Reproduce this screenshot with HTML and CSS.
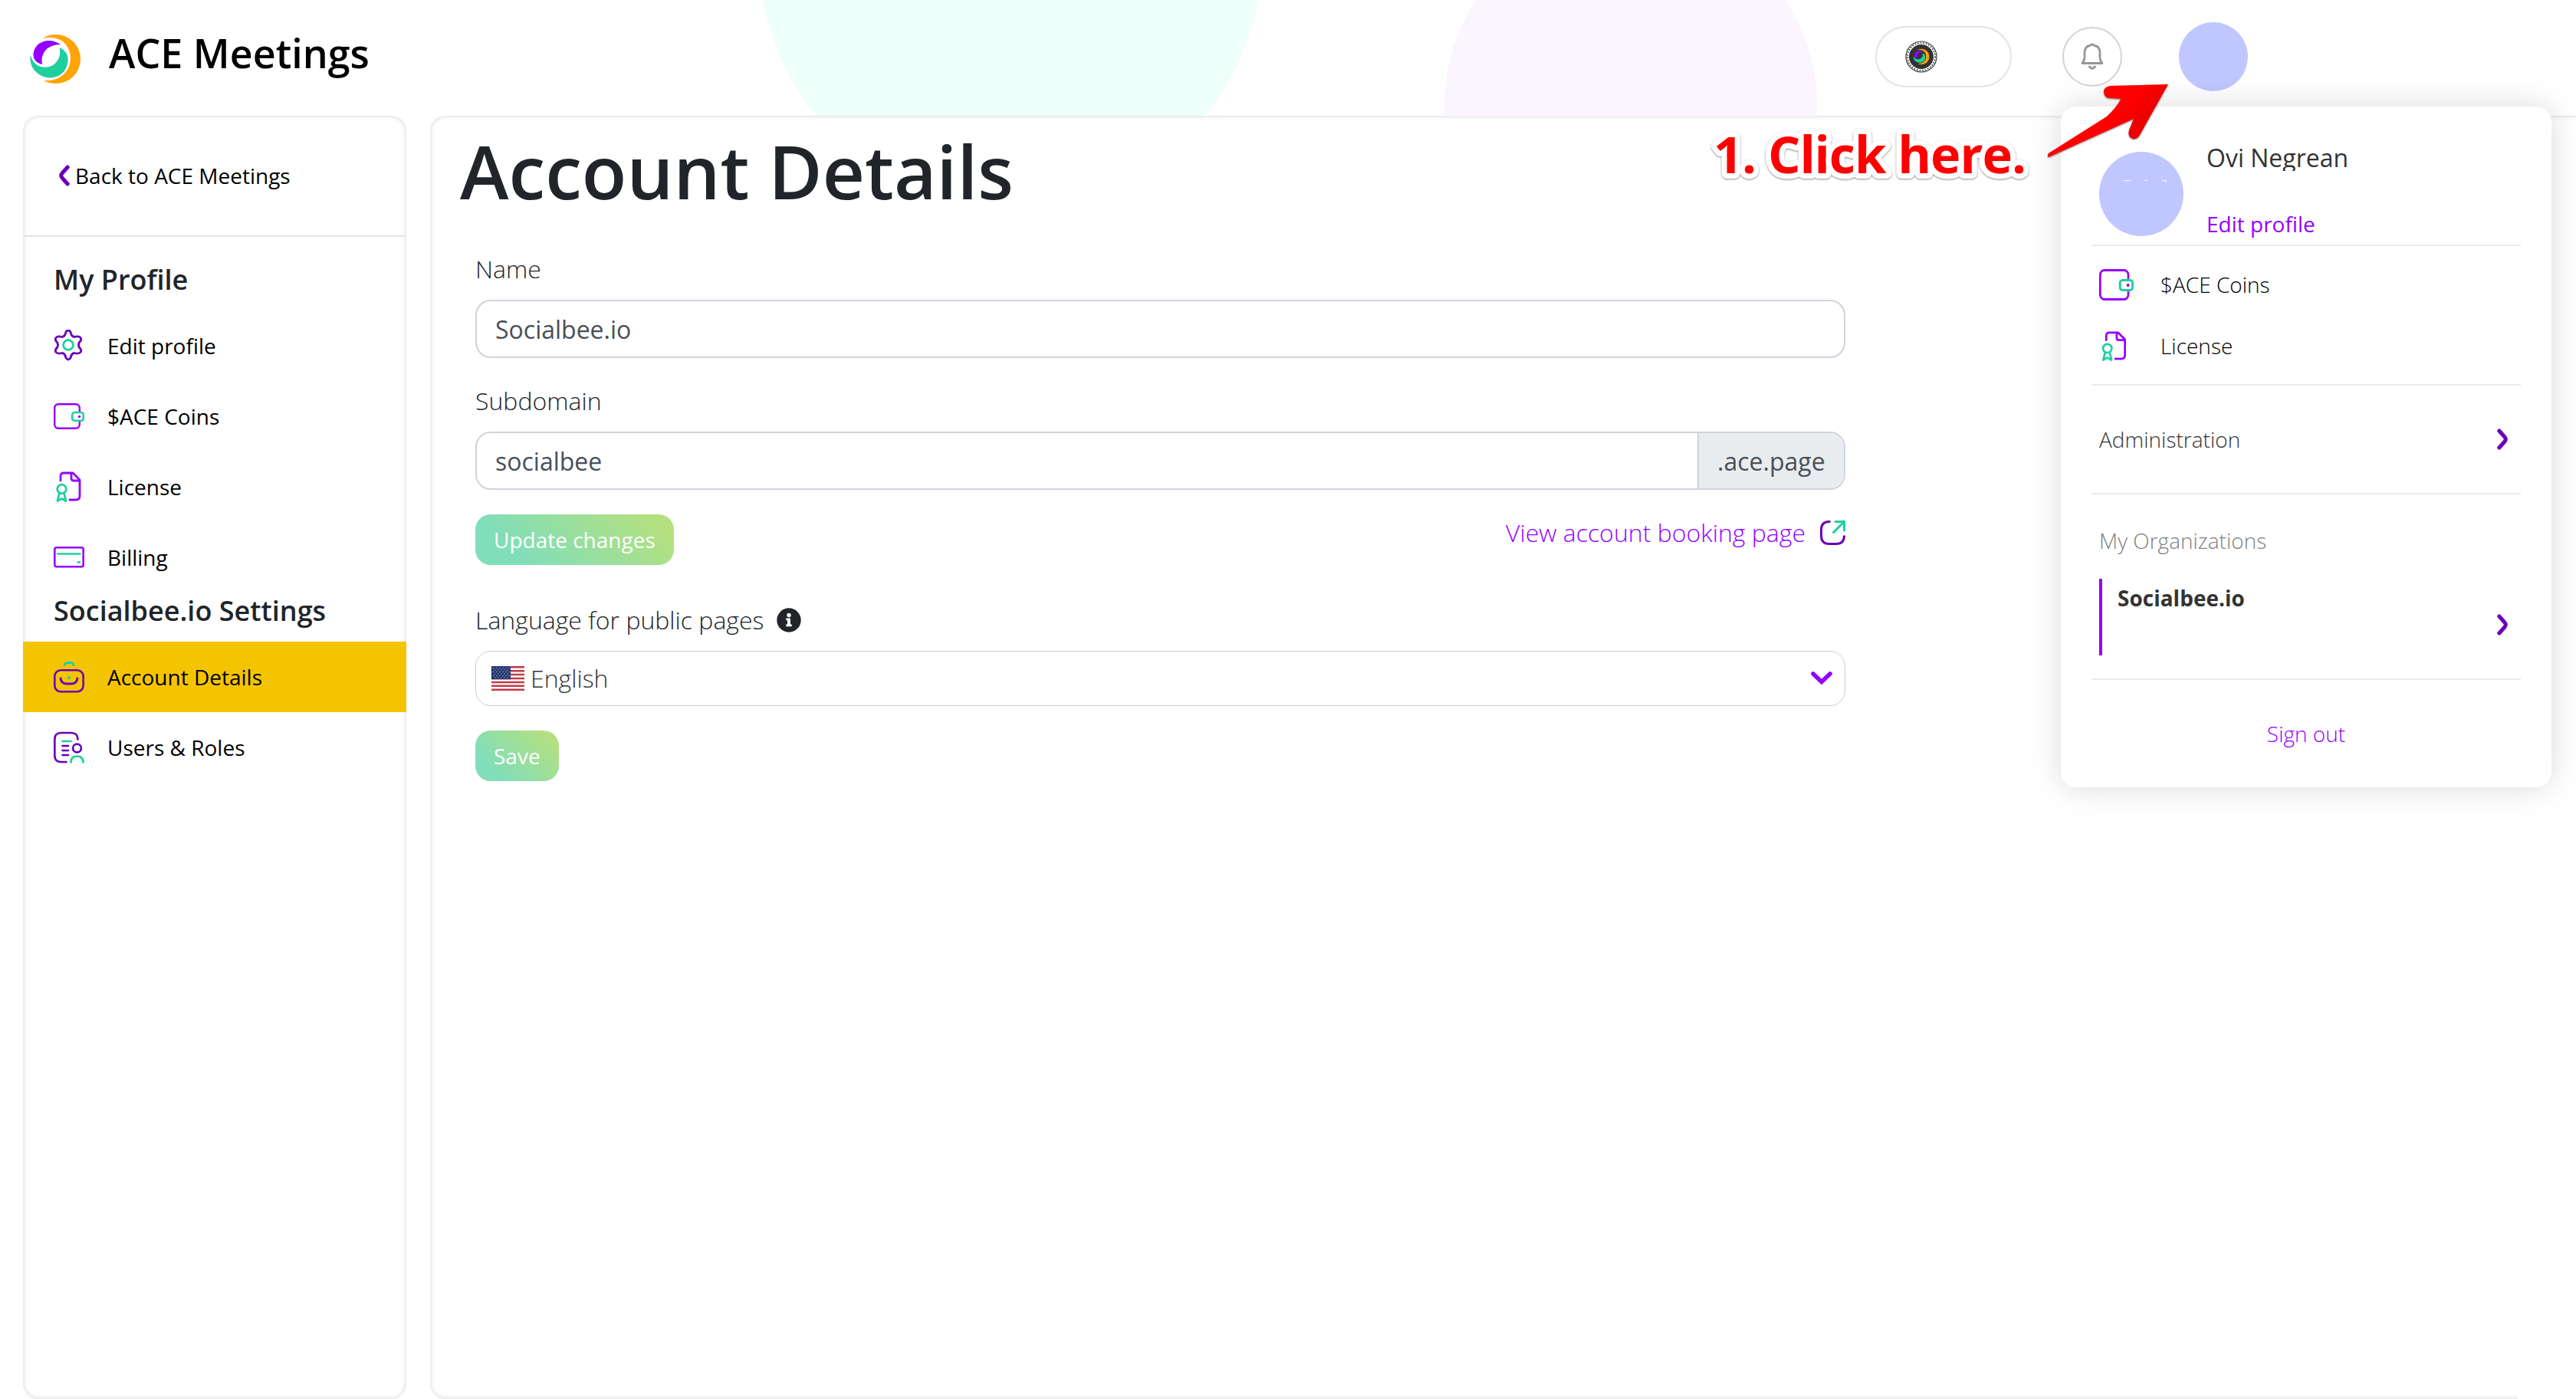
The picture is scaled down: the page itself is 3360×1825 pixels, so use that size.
FILE: index.html
```html
<!DOCTYPE html>
<html lang="en">

<head>
  <meta charset="UTF-8">
  <title>ACE Meetings</title>
  <link rel="stylesheet" href="styles.css">
</head>
<body>
  <svg class="defs">
    <symbol id="logo" viewBox="0 0 66 64">
      <path fill="#ffa400" d="M17 5C24 0 31 0 34 0a32 32 0 0 1 0 64Q25 64 18 60Q33 61 43 53Q53 44 53 31Q53 18 43 9Q32 2 17 5Z"/>
      <path fill="#9500ff" d="M16 39Q4 36 4.500 25Q6 13 18 9Q29 6 40 13Q27 13 20 21Q14 29 16 39Z"/>
      <path fill="#1fcf9f" d="M.6 27Q5 41 17 42.500Q28 44 34.500 36Q41 28 38.500 17Q50 22 49.700 34Q48 51 33 55.500Q19 59 8 49Q-1 41 .6 27Z"/>
    </symbol>
    <symbol id="wallet" viewBox="0 0 40 34" preserveAspectRatio="none">
      <rect x="1.200" y="1.200" width="32.600" height="31.600" rx="5" fill="none" stroke="#9500ff" stroke-width="2.400"/>
      <rect x="24.200" y="12" width="14.600" height="10.800" rx="3" fill="#fff" stroke="#1fcf9f" stroke-width="2.600"/>
      <circle cx="33.500" cy="17.500" r="1.700" fill="#9500ff"/>
    </symbol>
    <symbol id="license" viewBox="0 0 34 40">
      <path d="M6 12V6Q6 2 10 2H22L31 11V32Q31 37 26 37H18M20 3V9Q20 12 23 12H31" fill="none" stroke="#9500ff" stroke-width="2.800" stroke-linecap="round" stroke-linejoin="round"/>
      <circle cx="7.500" cy="23" r="5.800" fill="none" stroke="#1fcf9f" stroke-width="2.800"/>
      <path d="M4.500 28L2 38.500L7.500 35.500L13 38.500L10.500 28" fill="none" stroke="#1fcf9f" stroke-width="2.800" stroke-linecap="round" stroke-linejoin="round"/>
    </symbol>
    <symbol id="chevron" viewBox="0 0 14 28">
      <path d="M2.800 3L10 11Q12.500 14 10 17L2.800 25" fill="none" stroke="#6a00b8" stroke-width="5" stroke-linecap="round"/>
    </symbol>
  </svg>

  <div class="circle circle-green"></div>
  <div class="circle circle-purple"></div>

  <header class="header">
    <svg class="logo"><use href="#logo"/></svg>
    <div class="brand">ACE Meetings</div>
    <div class="coins">
      <svg width="42" height="42" viewBox="0 0 42 42">
        <circle cx="21" cy="21" r="20" fill="#fff" stroke="#333" stroke-width="1.200"/>
        <circle cx="21" cy="21" r="18" fill="none" stroke="#333" stroke-width="1.500" stroke-dasharray="1.800 1.800"/>
        <circle cx="21" cy="21" r="16" fill="#333"/>
        <use href="#logo" x="10.500" y="10.500" width="21" height="21"/>
      </svg>
    </div>
    <div class="bell">
      <svg width="30" height="36" viewBox="0 0 30 36">
        <path d="M2 26.500H28Q25 23 25 19V13Q25 4.500 18 3.500Q15 .5 12 3.500Q5 4.500 5 13V19Q5 23 2 26.500Z" fill="none" stroke="#969696" stroke-width="2.800" stroke-linejoin="round"/>
        <path d="M11.500 31Q15 35.500 18.500 31" fill="none" stroke="#969696" stroke-width="3" stroke-linecap="round"/>
      </svg>
    </div>
    <div class="avatar"></div>
  </header>

  <div class="layout">
    <nav class="sidebar">
      <a class="back"><svg class="chevron back-icon"><use href="#chevron"/></svg>Back to ACE Meetings</a>
      <h4 class="side-title side-title-first">My Profile</h4>
      <a class="item">
        <svg class="icon" viewBox="0 0 40 42">
          <path d="M16 3Q19 -1 22 3Q23 9 27 9.500Q33 8 35 10.500Q37 14 33.500 16.500Q31.500 20 33.500 23.500Q37 26 35 29.500Q33 32 27 30.500Q23 31 22 37Q19 41 16 37Q15 31 11 30.500Q5 32 3 29.500Q1 26 4.500 23.500Q6.500 20 4.500 16.500Q1 14 3 10.500Q5 8 11 9.500Q15 9 16 3Z" fill="none" stroke="#6a00b8" stroke-width="2.800" stroke-linejoin="round"/>
          <circle cx="19" cy="20" r="6.400" fill="none" stroke="#1fcf9f" stroke-width="2.800"/>
        </svg>
        Edit profile
      </a>
      <a class="item"><svg class="icon icon-wallet"><use href="#wallet"/></svg>$ACE Coins</a>
      <a class="item"><svg class="icon icon-license"><use href="#license"/></svg>License</a>
      <a class="item">
        <svg class="icon" viewBox="0 0 40 42">
          <rect x="1.300" y="8.300" width="37.400" height="25" rx="2.500" fill="none" stroke="#9500ff" stroke-width="2.600"/>
          <path d="M5 16.500H34.500M31.500 27.500H34" fill="none" stroke="#1fcf9f" stroke-width="2.600" stroke-linecap="round"/>
        </svg>
        Billing
      </a>
      <h4 class="side-title">Socialbee.io Settings</h4>
      <a class="item active">
        <svg class="icon" viewBox="0 0 40 42">
          <path d="M14 7Q14 2.500 18 2.500H22Q26 2.500 26 7" fill="none" stroke="#1fcf9f" stroke-width="2.800"/>
          <rect x="1.300" y="12.300" width="37.400" height="28" rx="8" fill="none" stroke="#6a00b8" stroke-width="2.600"/>
          <path d="M9 23Q10 30 17 30H23Q30 30 31 23" fill="none" stroke="#6a00b8" stroke-width="2.800" stroke-linecap="round"/>
          <circle cx="20" cy="22" r="2" fill="#1fcf9f"/>
        </svg>
        Account Details
      </a>
      <a class="item">
        <svg class="icon" viewBox="0 0 40 42">
          <path d="M31.500 10.500Q31.500 2 23 2H9.500Q1.300 2 1.300 10.500V31.500Q1.300 40 9.500 40H16.500M11.500 19H19M11.500 25H19M11.500 31H19" fill="none" stroke="#6a00b8" stroke-width="2.700" stroke-linecap="round"/>
          <path d="M11.500 13H22.500M22.500 40.500Q22.500 32.500 30.500 32.500Q38.500 32.500 38.500 40.500" fill="none" stroke="#1fcf9f" stroke-width="2.700" stroke-linecap="round"/>
          <circle cx="30.500" cy="22" r="5.400" fill="none" stroke="#6a00b8" stroke-width="2.700"/>
        </svg>
        Users &amp; Roles
      </a>
    </nav>

    <main class="content">
      <h1 class="title">Account Details</h1>
      <div class="form">
        <label class="label">Name</label>
        <div class="input">Socialbee.io</div>
        <label class="label">Subdomain</label>
        <div class="input group">
          <span class="group-text">socialbee</span>
          <span class="addon">.ace.page</span>
        </div>
        <div class="actions">
          <button class="btn">Update changes</button>
          <a class="view-link">
            View account booking page
            <svg width="33" height="33" viewBox="0 0 33 33">
              <path d="M13.500 1.500H12Q1.500 1.500 1.500 12V20Q1.500 30.500 12 30.500H21Q31.500 30.500 31.500 19.500" fill="none" stroke="#6a00b8" stroke-width="3"/>
              <path d="M20 1.500H31.500V13M30.500 2.500L17.500 15.500" fill="none" stroke="#1fcf9f" stroke-width="3" stroke-linecap="round"/>
            </svg>
          </a>
        </div>
        <label class="label label-info">
          Language for public pages
          <svg width="32" height="32" viewBox="0 0 32 32">
            <circle cx="16" cy="16" r="15.700" fill="#212529"/>
            <circle cx="16" cy="9.500" r="2.700" fill="#fff"/>
            <path d="M12.300 13.500H18V21.500H19.800V24.200H12.300V21.500H14V16.200H12.300Z" fill="#fff"/>
          </svg>
        </label>
        <div class="select">
          <svg width="43" height="32" viewBox="0 0 43 32">
            <path fill="#fff" d="M0 0H43V32H0Z"/>
            <path stroke="#c43a48" stroke-width="2.460" d="M0 1.230H43M0 6.150H43M0 11.070H43M0 16H43M0 20.900H43M0 25.850H43M0 30.770H43"/>
            <path fill="#23366f" d="M0 0H25V17.200H0Z"/>
            <path stroke="#c9cfe0" stroke-width="1.200" stroke-dasharray="1.200 2.900" d="M2 2.500H24M4 5H24M2 7.500H24M4 10H24M2 12.500H24M4 15H24"/>
          </svg>
          <span class="select-text">English</span>
          <svg width="28" height="18" viewBox="0 0 28 18"><path d="M3 3L14 13.500L25 3" fill="none" stroke="#9500ff" stroke-width="5.600" stroke-linecap="round"/></svg>
        </div>
        <button class="btn">Save</button>
      </div>
    </main>
  </div>
  <div class="edge"></div>

  <div class="dropdown">
    <div class="user">
      <div class="user-avatar">
        <svg width="110" height="110" viewBox="0 0 110 110"><path d="M32 37.500H42M59 37.500H63M82 37.500H87V40" fill="none" stroke="#fff" stroke-width="1.200"/></svg>
      </div>
      <div class="user-info">
        <div class="user-name">Ovi Negrean</div>
        <a class="user-edit">Edit profile</a>
      </div>
    </div>
    <div class="menu">
      <a class="menu-item"><svg class="menu-wallet"><use href="#wallet"/></svg>$ACE Coins</a>
      <a class="menu-item"><svg class="menu-license"><use href="#license"/></svg>License</a>
    </div>
    <a class="admin">Administration<svg class="chevron"><use href="#chevron"/></svg></a>
    <div class="orgs">
      <div class="orgs-title">My Organizations</div>
      <div class="org">Socialbee.io<svg class="chevron"><use href="#chevron"/></svg></div>
    </div>
    <a class="signout">Sign out</a>
  </div>

  <svg class="callout"><text x="15" y="72" textLength="408">1. Click here.</text></svg>
  <svg class="arrow" viewBox="0 0 164 102">
    <defs>
      <linearGradient id="red" gradientUnits="userSpaceOnUse" x1="100" y1="34" x2="120" y2="52">
        <stop offset="0" stop-color="#ff0000"/>
        <stop offset="1" stop-color="#ee0000"/>
      </linearGradient>
    </defs>
    <path fill="url(#red)" d="M160 2L85 4Q76 5 76 12Q77 20 84 20L98.500 21Q92 33 80 44L4 92Q2 95 4 97L115 47L109 62Q107 71 114 73Q120 74 123 68Z"/>
  </svg>
</body>
</html>
```

FILE: styles.css
```css
* {
  margin: 0;
  padding: 0;
  box-sizing: border-box;
}

body {
  position: relative;
  width: 3360px;
  height: 1825px;
  background: #fff;
  color: #212529;
  font-family: "Open Sans", "Noto Sans", sans-serif;
  font-size: 32px;
  font-weight: 300;
  overflow: hidden;
}

svg {
  display: block;
  flex-shrink: 0;
}

.defs {
  position: absolute;
  width: 0;
  height: 0;
}

/* background circles */
.circle {
  position: absolute;
  border-radius: 50%;
}

.circle-green {
  left: 990px;
  top: -385px;
  width: 656px;
  height: 656px;
  background: #effffa;
}

.circle-purple {
  left: 1884px;
  top: -107px;
  width: 486px;
  height: 486px;
  background: #faf5ff;
}

/* header */
.header {
  position: relative;
  display: flex;
  align-items: center;
  height: 151px;
  padding: 0 428px 3px 39px;
}

.logo {
  width: 66px;
  height: 64px;
  margin-top: 5px;
}

.brand {
  margin: 0 auto 10px 37px;
  color: #000;
  font-size: 52px;
  line-height: 70px;
  font-weight: 600;
}

.coins {
  display: flex;
  align-items: center;
  width: 178px;
  height: 80px;
  padding-left: 37px;
  border: 2px solid #e3e3e3;
  border-radius: 40px;
}

.bell {
  display: flex;
  align-items: center;
  justify-content: center;
  width: 78px;
  height: 78px;
  margin: 0 74px 0 66px;
  border: 2px solid #d3d3d3;
  border-radius: 50%;
}

.avatar {
  width: 90px;
  height: 90px;
  border-radius: 50%;
  background: #c0c7ff;
}

/* layout */
.layout {
  position: relative;
  display: flex;
  gap: 31px;
  height: 1674px;
  margin-left: 30px;
}

.sidebar,
.content {
  border-radius: 20px;
  background: #fff;
  box-shadow: inset 0 0 6px rgba(0, 0, 0, 0.18);
}

.sidebar {
  width: 500px;
}

.chevron {
  width: 14px;
  height: 28px;
}

.back {
  display: flex;
  align-items: center;
  height: 158px;
  padding-left: 47px;
  border-bottom: 2px solid #e3e3e3;
  color: #000;
  font-size: 28px;
  font-weight: 400;
}

.back-icon {
  margin-right: 7px;
  transform: scaleX(-1);
}

.side-title {
  height: 64px;
  padding-left: 40px;
  font-size: 36px;
  line-height: 48px;
  font-weight: 600;
}

.side-title-first {
  height: 96px;
  padding-top: 32px;
}

.item {
  display: flex;
  align-items: center;
  gap: 30px;
  height: 92px;
  padding-left: 40px;
  color: #000;
  font-size: 28px;
  font-weight: 400;
}

.active {
  background: #f5c400;
}

.icon {
  width: 40px;
  height: 42px;
}

.icon-wallet {
  height: 34px;
}

.icon-license {
  height: 40px;
}

.content {
  flex: 1;
  margin-right: -40px;
  padding: 14px 0 0 59px;
}

.title {
  margin: 0 0 46px -20px;
  font-size: 96px;
  line-height: 116px;
  font-weight: 600;
}

.form {
  width: 1787px;
}

.label {
  display: block;
  margin-bottom: 16px;
  line-height: 48px;
}

.label-info {
  display: flex;
  align-items: center;
  gap: 17px;
}

.input {
  height: 76px;
  margin-bottom: 32px;
  padding-left: 24px;
  border: 2px solid #ced4da;
  border-radius: 20px;
  color: #495057;
  line-height: 74px;
  font-weight: 400;
}

.group {
  display: flex;
  overflow: hidden;
}

.group-text {
  flex: 1;
}

.addon {
  width: 191px;
  padding-left: 24px;
  border-left: 2px solid #ced4da;
  background: #e9ecef;
}

.actions {
  display: flex;
  justify-content: space-between;
  margin-bottom: 48px;
}

.btn {
  height: 66px;
  padding: 0 24px;
  border: 0;
  border-radius: 20px;
  background: linear-gradient(45deg, #80deba 20%, #b4e080 90%);
  color: #fff;
  font-family: inherit;
  font-size: 28px;
  line-height: 66px;
  font-weight: 400;
}

.view-link {
  display: flex;
  align-items: center;
  gap: 19px;
  height: 48px;
  color: #9500ff;
  line-height: 46px;
}

.select {
  display: flex;
  align-items: center;
  height: 72px;
  margin-bottom: 32px;
  padding: 0 16px 0 20px;
  border: 1px solid #ccc;
  border-radius: 20px;
  color: #333;
}

.select-text {
  flex: 1;
  padding: 0 0 2px 8px;
}

/* covers the end of the bottom border */
.edge {
  position: absolute;
  left: 3284px;
  bottom: 0;
  width: 76px;
  height: 8px;
  background: #fff;
}

/* profile menu */
.dropdown {
  position: absolute;
  left: 2688px;
  top: 139px;
  width: 640px;
  height: 888px;
  padding: 0 40px;
  border-radius: 20px;
  background: #fff;
  color: #333;
  font-size: 28px;
  box-shadow: 0 0 40px rgba(0, 0, 0, 0.15);
}

.user {
  display: flex;
  gap: 30px;
  height: 182px;
  padding: 46px 0 0 10px;
  border-bottom: 2px solid #e9ebef;
}

.user-avatar {
  width: 110px;
  height: 110px;
  margin-top: 13px;
  border-radius: 50%;
  background: #c0c7ff;
}

.user-name {
  height: 38px;
  margin-bottom: 50px;
  font-size: 32px;
  line-height: 42px;
  font-weight: 400;
  overflow: hidden;
}

.user-edit {
  display: block;
  color: #9500ff;
  line-height: 38px;
  font-weight: 400;
}

.menu {
  height: 182px;
  padding: 10px 0 0 10px;
  border-bottom: 2px solid #e9ebef;
}

.menu-item {
  display: flex;
  align-items: center;
  height: 80px;
  color: #000;
}

.menu-wallet {
  width: 45px;
  height: 41px;
  margin-right: 35px;
}

.menu-license {
  width: 34px;
  height: 39px;
  margin: 0 43px 0 3px;
}

.admin {
  display: flex;
  align-items: center;
  justify-content: space-between;
  height: 142px;
  padding: 0 17px 0 10px;
  border-bottom: 2px solid #ebebeb;
}

.orgs {
  height: 242px;
  padding: 40px 17px 0 10px;
  border-bottom: 2px solid #ebebeb;
}

.orgs-title {
  margin-bottom: 30px;
  color: #808080;
  line-height: 40px;
}

.org {
  display: flex;
  justify-content: space-between;
  height: 100px;
  padding: 5px 0 0 20px;
  border-left: 4px solid #9500ff;
  line-height: 40px;
  font-weight: 700;
}

.org .chevron {
  margin-top: 41px;
}

.signout {
  display: block;
  color: #9500ff;
  line-height: 140px;
  text-align: center;
}

/* callout */
.callout {
  position: absolute;
  left: 2220px;
  top: 154px;
  width: 440px;
  height: 92px;
  fill: #f00;
  font-size: 67px;
  font-weight: 700;
  stroke: #fff;
  stroke-width: 14px;
  stroke-linejoin: round;
  paint-order: stroke;
  filter: drop-shadow(0 1px 1px rgba(0, 0, 0, 0.45));
}

.arrow {
  position: absolute;
  left: 2668px;
  top: 108px;
  width: 164px;
  height: 102px;
  filter: drop-shadow(0 1px 1px rgba(0, 0, 0, 0.5));
}
```
